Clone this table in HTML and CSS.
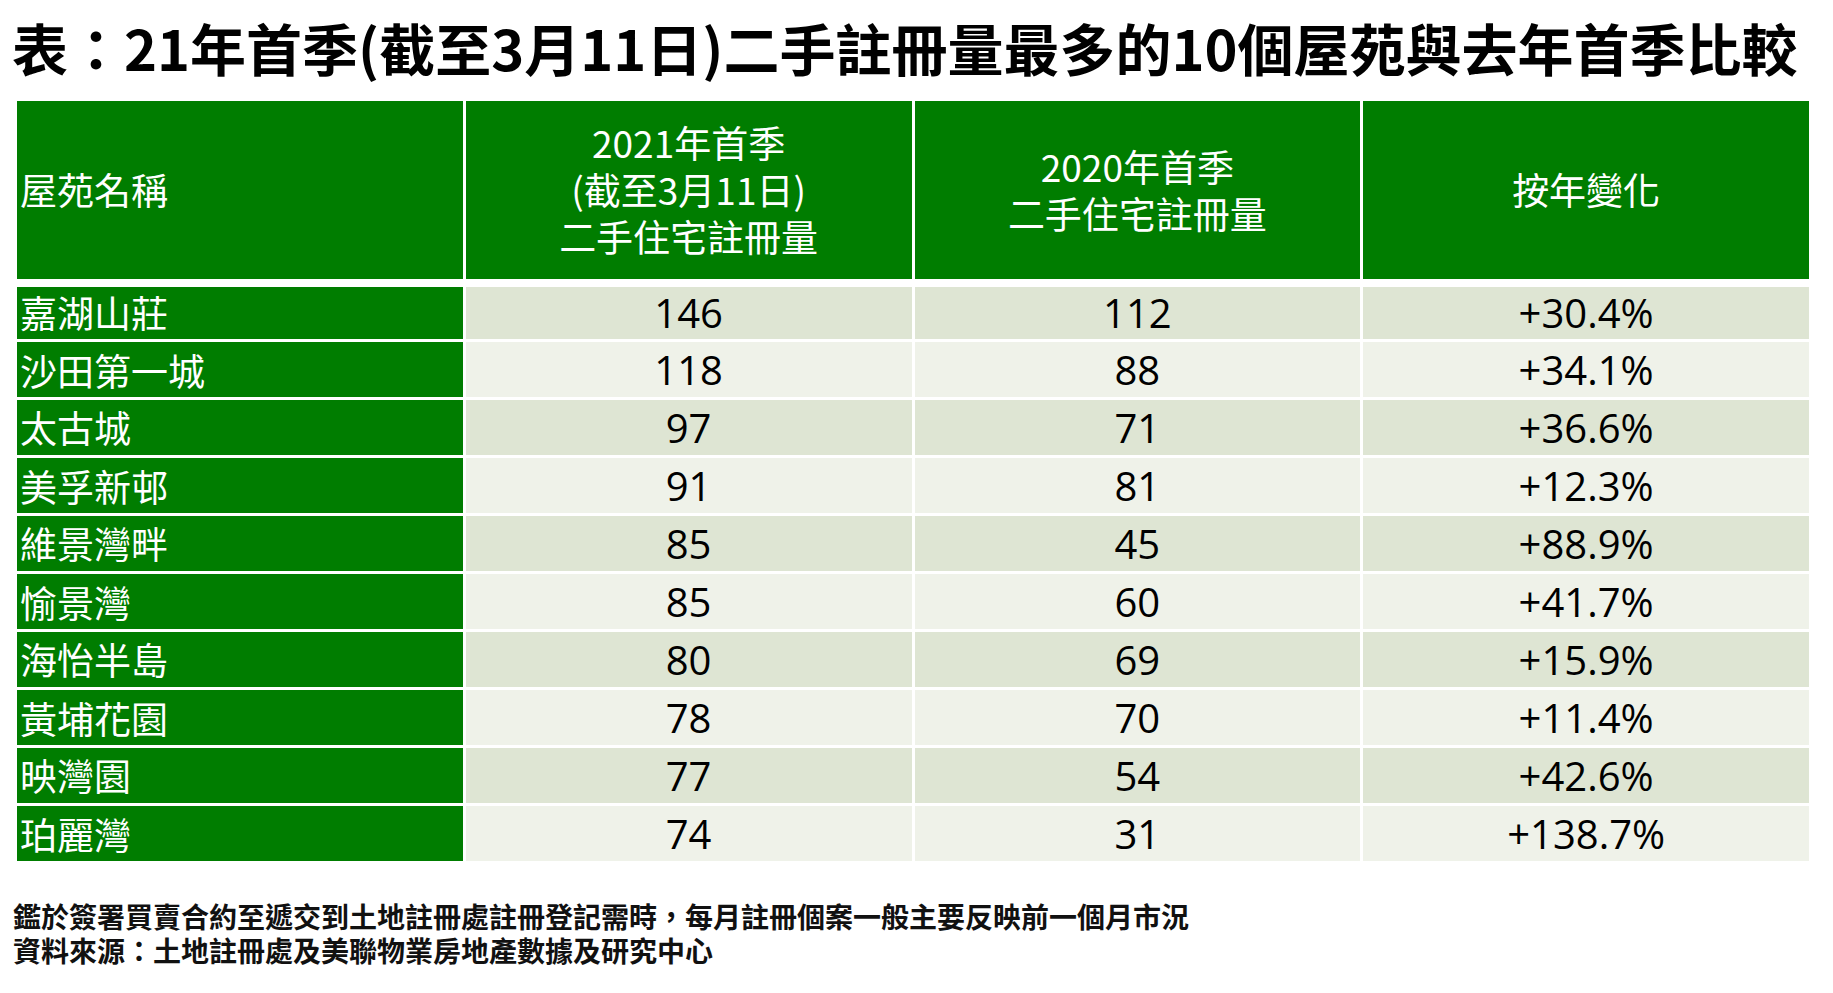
FILE: index.html
```html
<!DOCTYPE html>
<html lang="zh-Hant">
<head>
<meta charset="utf-8">
<title>21年首季二手註冊量最多的10個屋苑</title>
<link rel="stylesheet" href="styles.css">
</head>
<body>
<main class="page">
  <h1 class="title">表：21年首季(截至3月11日)二手註冊量最多的10個屋苑與去年首季比較</h1>
  <div class="table">
    <div class="row head">
      <div class="cell name">屋苑名稱</div>
      <div class="cell">2021年首季<br>(截至3月11日)<br>二手住宅註冊量</div>
      <div class="cell">2020年首季<br>二手住宅註冊量</div>
      <div class="cell">按年變化</div>
    </div>
    <div class="row odd first">
      <div class="cell name">嘉湖山莊</div><div class="cell">146</div><div class="cell">112</div><div class="cell">+30.4%</div>
    </div>
    <div class="row even">
      <div class="cell name">沙田第一城</div><div class="cell">118</div><div class="cell">88</div><div class="cell">+34.1%</div>
    </div>
    <div class="row odd">
      <div class="cell name">太古城</div><div class="cell">97</div><div class="cell">71</div><div class="cell">+36.6%</div>
    </div>
    <div class="row even">
      <div class="cell name">美孚新邨</div><div class="cell">91</div><div class="cell">81</div><div class="cell">+12.3%</div>
    </div>
    <div class="row odd">
      <div class="cell name">維景灣畔</div><div class="cell">85</div><div class="cell">45</div><div class="cell">+88.9%</div>
    </div>
    <div class="row even">
      <div class="cell name">愉景灣</div><div class="cell">85</div><div class="cell">60</div><div class="cell">+41.7%</div>
    </div>
    <div class="row odd">
      <div class="cell name">海怡半島</div><div class="cell">80</div><div class="cell">69</div><div class="cell">+15.9%</div>
    </div>
    <div class="row even">
      <div class="cell name">黃埔花園</div><div class="cell">78</div><div class="cell">70</div><div class="cell">+11.4%</div>
    </div>
    <div class="row odd">
      <div class="cell name">映灣園</div><div class="cell">77</div><div class="cell">54</div><div class="cell">+42.6%</div>
    </div>
    <div class="row even">
      <div class="cell name">珀麗灣</div><div class="cell">74</div><div class="cell">31</div><div class="cell">+138.7%</div>
    </div>
  </div>
  <div class="notes">
    <p>鑑於簽署買賣合約至遞交到土地註冊處註冊登記需時，每月註冊個案一般主要反映前一個月市況</p>
    <p>資料來源：土地註冊處及美聯物業房地產數據及研究中心</p>
  </div>
</main>
</body>
</html>
```

FILE: styles.css
```css
html, body {
  margin: 0;
  padding: 0;
  background: #ffffff;
}

body {
  font-family: "Noto Sans CJK TC", "Noto Sans", sans-serif;
  color: #000000;
}

.page {
  padding-top: 15px;
}

.title {
  margin: 0 0 22px 12px;
  font-size: 56px;
  line-height: 64px;
  font-weight: 700;
  white-space: nowrap;
  color: #000000;
}

.table {
  margin-left: 17px;
  width: 1792px;
  display: flex;
  flex-direction: column;
  gap: 3px;
}

.row {
  display: grid;
  grid-template-columns: repeat(4, 1fr);
  grid-template-rows: 100%;
  column-gap: 3px;
  height: 55px;
  flex: none;
}

.row.head {
  height: 178px;
  margin-bottom: 5px;
}

.row.first {
  height: 52px;
}

.cell {
  display: flex;
  align-items: center;
  justify-content: center;
  text-align: center;
  font-family: "Open Sans", "Noto Sans CJK TC", sans-serif;
  font-size: 40px;
  line-height: 44px;
  color: #000000;
}

.row.odd .cell {
  background: #dee5d3;
}

.row.even .cell {
  background: #eff2e9;
}

.row .cell.name,
.row.head .cell {
  background: #007d00;
  color: #ffffff;
  font-family: "Noto Sans CJK TC", sans-serif;
  font-size: 37px;
}

.row .cell.name {
  justify-content: flex-start;
  padding-left: 3px;
  text-align: left;
  line-height: 44px;
}

.row.odd .cell.name {
  padding-bottom: 2px;
}

.row.head .cell {
  line-height: 47px;
  padding-bottom: 1px;
  box-sizing: border-box;
}

.notes {
  margin: 38px 0 0 13px;
  font-size: 28px;
  line-height: 34px;
  font-weight: 700;
  color: #111111;
}

.notes p {
  margin: 0;
  white-space: nowrap;
}
```
